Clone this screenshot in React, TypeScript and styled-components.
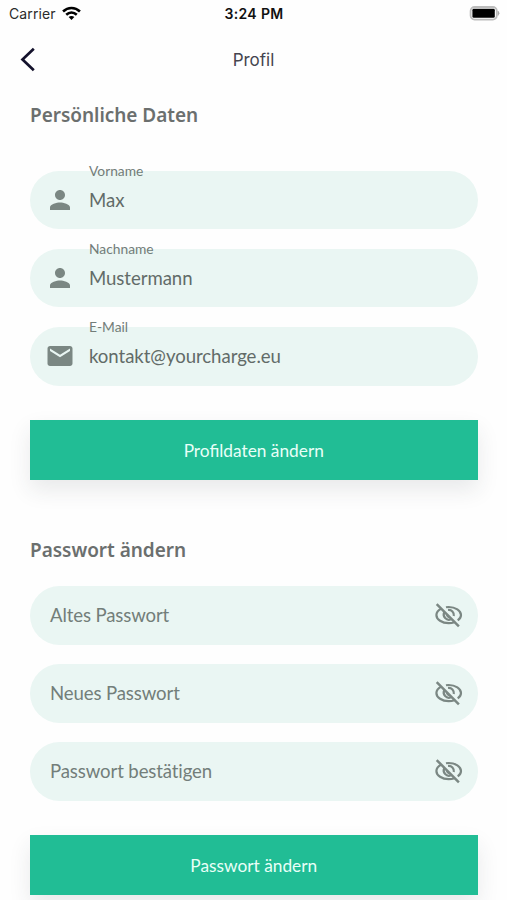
import React from 'react';
import styled, { createGlobalStyle } from 'styled-components';
import { MdPerson, MdEmail } from 'react-icons/md';

const GlobalStyle = createGlobalStyle`
  * { box-sizing: border-box; }
  body { margin: 0; background: #fff; overflow: hidden; }
`;

const Screen = styled.main`
  display: flex;
  flex-direction: column;
  width: 507px;
  height: 900px;
  overflow: hidden;
  background: #fefefe;
  color: #68716e;
  font-family: Lato, sans-serif;
`;

const StatusBar = styled.div`
  display: grid;
  grid-template-columns: 1fr auto 1fr;
  align-items: center;
  flex: none;
  height: 28px;
  padding: 0 7px 0 9px;
  color: #111;
  font: 400 14px/28px Inter, sans-serif;
`;

const Carrier = styled.div`
  display: flex;
  align-items: center;
  gap: 6px;
  color: #2b2b2b;
  letter-spacing: 0.1px;

  svg { margin-top: -2px; }
`;

const Time = styled.div`
  padding-right: 1px;
  font-weight: 600;
  letter-spacing: 0.35px;
`;

const Battery = styled.svg`
  justify-self: end;
`;

const Header = styled.header`
  display: grid;
  grid-template-columns: 60px 1fr 60px;
  align-items: center;
  flex: none;
  height: 63px;
`;

const BackButton = styled.button`
  display: flex;
  padding: 0 0 0 20px;
  border: 0;
  background: none;
`;

const Title = styled.h1`
  margin: 0;
  text-align: center;
  color: #45454f;
  font: 400 17px/24px Inter, sans-serif;
`;

const Section = styled.section<{ $top: number; $gap: number }>`
  display: flex;
  flex-direction: column;
  flex: none;
  margin: ${(p) => p.$top}px 29.5px 0 30px;

  & > h2 { margin-bottom: ${(p) => p.$gap}px; }
`;

const Heading = styled.h2`
  margin: 0;
  color: #6b6f6e;
  font: 600 19px/28px 'Noto Sans', sans-serif;
  letter-spacing: -0.03px;
`;

const Fields = styled.div`
  display: grid;
  gap: 19.5px;
`;

const Field = styled.label<{ $icon?: boolean }>`
  position: relative;
  display: flex;
  align-items: center;
  height: 58.6px;
  padding: 0 14px ${(p) => (p.$icon ? 0.4 : 1)}px ${(p) => (p.$icon ? 14.5 : 20)}px;
  border-radius: 30px;
  background: #eaf6f3;
  color: #7b8783;

  svg { flex: none; }
`;

const FloatingLabel = styled.span`
  position: absolute;
  top: -9px;
  left: 59px;
  color: #727d79;
  font-size: 13.8px;
  line-height: 18px;
`;

const Value = styled.span<{ $icon?: boolean }>`
  flex: 1;
  padding-left: ${(p) => (p.$icon ? 14.5 : 0)}px;
  color: ${(p) => (p.$icon ? '#626b68' : '#737e7a')};
  font-size: 18.6px;
  line-height: 28px;
  letter-spacing: ${(p) => (p.$icon ? -0.05 : -0.12)}px;
  font-variant-ligatures: none;
`;

const SubmitButton = styled.button`
  height: 59.7px;
  margin-top: 34.3px;
  padding: 1.6px 0 0;
  border: 0;
  background: #21bd95;
  color: #e9fff8;
  font: 400 17.3px/28px Lato, sans-serif;
  box-shadow: 0 10px 22px rgba(40, 45, 55, 0.1);
`;

const HiddenEye = () => (
  <svg width="30" height="30" viewBox="0 0 30 30" fill="none" stroke="#7b8783" strokeWidth="2.2">
    <path d="M7.2 8.6C4.2 10.3 2.4 12.6 2.4 15c0 4.5 5.6 8.1 12.3 8.1 2 0 4-.3 5.7-.9" />
    <path d="M12 7.2c.9-.2 1.8-.2 2.7-.2C21.4 7 27 10.7 27 15c0 1.9-1.2 3.9-3.3 5.3" />
    <path d="M10.2 12.3a5.2 5.2 0 0 0 6.7 7" />
    <path d="M14 9.9a5.2 5.2 0 0 1 5.8 6.1" />
    <path d="M13 14.5a2.5 2.5 0 0 0 3 2.6" strokeWidth="2" />
    <path d="M2.7 4.1 24.9 26.3" strokeWidth="2.5" />
  </svg>
);

const profile = [
  { label: 'Vorname', value: 'Max', Icon: MdPerson },
  { label: 'Nachname', value: 'Mustermann', Icon: MdPerson },
  { label: 'E-Mail', value: 'kontakt@yourcharge.eu', Icon: MdEmail },
];

const passwords = ['Altes Passwort', 'Neues Passwort', 'Passwort bestätigen'];

export default function App() {
  return (
    <Screen>
      <GlobalStyle />
      <StatusBar>
        <Carrier>
          Carrier
          <svg width="19" height="15" viewBox="0 0 18 14" fill="none" stroke="#000" strokeWidth="2.4">
            <path d="M1 5.1C5.6.6 12.4.6 17 5.1" />
            <path d="M4 8.2C7 5.4 11 5.4 14 8.2" />
            <path d="M6.3 10.4C7.9 8.9 10.1 8.9 11.7 10.4L9 13.2Z" fill="#000" stroke="none" />
          </svg>
        </Carrier>
        <Time>3:24 PM</Time>
        <Battery width="31" height="16" viewBox="0 0 31 16">
          <rect x="1.6" y="1" width="26.2" height="12.6" rx="4" fill="#fff" stroke="#bcbcbc" strokeWidth="1.8" />
          <rect x="3.4" y="2.8" width="22.4" height="9" rx="1.4" fill="#000" />
          <path d="M29 5.1q2.4 2.2 0 4.4z" fill="#aaa" stroke="#aaa" strokeWidth=".5" />
        </Battery>
      </StatusBar>
      <Header>
        <BackButton aria-label="Zurück">
          <svg width="16" height="26" viewBox="0 0 16 26" fill="none" stroke="#14122c" strokeWidth="2.7">
            <path d="M13.8 1.7 2.5 12.5l11.3 10.8" />
          </svg>
        </BackButton>
        <Title>Profil</Title>
      </Header>
      <Section $top={10} $gap={41.8}>
        <Heading>Persönliche Daten</Heading>
        <Fields>
          {profile.map(({ label, value, Icon }) => (
            <Field key={label} $icon>
              <Icon size={30} />
              <FloatingLabel>{label}</FloatingLabel>
              <Value $icon>{value}</Value>
            </Field>
          ))}
        </Fields>
        <SubmitButton>Profildaten ändern</SubmitButton>
      </Section>
      <Section $top={56.6} $gap={22}>
        <Heading>Passwort ändern</Heading>
        <Fields>
          {passwords.map((label) => (
            <Field key={label}>
              <Value>{label}</Value>
              <HiddenEye />
            </Field>
          ))}
        </Fields>
        <SubmitButton>Passwort ändern</SubmitButton>
      </Section>
    </Screen>
  );
}
